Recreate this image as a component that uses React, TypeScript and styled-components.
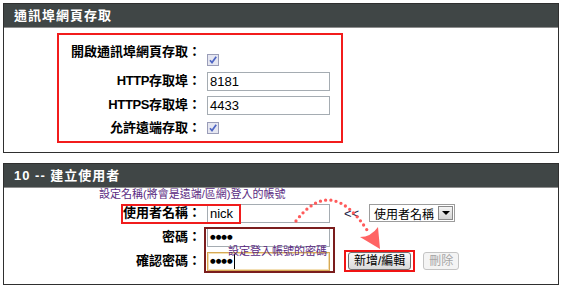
import React from 'react';
import styled, { createGlobalStyle } from 'styled-components';

const GlobalStyle = createGlobalStyle`
  html, body {
    margin: 0;
    padding: 0;
    background: #ffffff;
  }
  body {
    font-family: "Liberation Sans", "Noto Sans CJK TC", sans-serif;
    color: #000000;
  }
`;

const Page = styled.div`
  padding: 3px 3px 0;
  display: flex;
  flex-direction: column;
  gap: 10px;
`;

const Panel = styled.section`
  border: 1px solid #2f2f2f;
`;

const Header = styled.div`
  height: 23px;
  line-height: 23px;
  background: #404646;
  border-bottom: 1px solid #8e8e8e;
  color: #ffffff;
  font-size: 13px;
  font-weight: 700;
  letter-spacing: 1px;
  padding-left: 10px;
  white-space: nowrap;
`;

const AccessBody = styled.div`
  padding: 5px 0 9px 53px;
`;

// red annotation frame around the whole access form
const RedFrame = styled.div`
  width: 286px;
  box-sizing: border-box;
  border: 2px solid #f21c1c;
  padding: 6px 0 2px 0;
`;

const UserBody = styled.div`
  position: relative;
  padding: 0 0 11px 0;
`;

const Hint = styled.div`
  height: 13px;
  line-height: 13px;
  padding-left: 95px;
  font-size: 11px;
  color: #5a2a82;
  white-space: nowrap;
`;

const FormGrid = styled.div<{ $columns: string; $rows: string }>`
  display: grid;
  grid-template-columns: ${(p) => p.$columns};
  grid-template-rows: ${(p) => p.$rows};
  column-gap: 6px;
`;

const Label = styled.div<{ $top?: boolean }>`
  align-self: ${(p) => (p.$top ? 'start' : 'center')};
  line-height: 22px;
  text-align: right;
  font-size: 13px;
  font-weight: 700;
  white-space: nowrap;
`;

const Latin = styled.span`
  letter-spacing: -0.4px;
`;

const Field = styled.div<{ $focused?: boolean }>`
  align-self: center;
  height: 19px;
  box-sizing: border-box;
  border: 1px solid ${(p) => (p.$focused ? '#d6a955' : '#a5acb2')};
  box-shadow: ${(p) => (p.$focused ? 'inset 0 0 0 1px #f3dfb4' : 'none')};
  background: #ffffff;
  padding: 0 2px;
  display: flex;
  align-items: center;
  font-size: 13px;
  white-space: nowrap;
`;

const Mask = styled.span`
  font-family: "DejaVu Sans", sans-serif;
  font-size: 6.5px;
  line-height: 1;
`;

const Caret = styled.span`
  width: 1px;
  height: 15px;
  background: #000000;
  margin-left: 1px;
`;

const CheckWrap = styled.div<{ $bottom?: boolean }>`
  align-self: ${(p) => (p.$bottom ? 'end' : 'center')};
  margin-bottom: ${(p) => (p.$bottom ? '3px' : '0')};
  height: 12px;
  display: flex;
`;

const Extra = styled.div`
  align-self: center;
  margin-left: 8px;
  display: flex;
  align-items: center;
`;

const Arrows = styled.span`
  font-size: 13px;
  color: #1c1c44;
  width: 25px;
`;

const Select = styled.div`
  width: 86px;
  height: 18px;
  box-sizing: border-box;
  border: 1px solid #9c9c9c;
  display: flex;
  align-items: center;
  justify-content: space-between;
  padding: 0 1px 0 4px;
  font-size: 12px;
  white-space: nowrap;
`;

const SelectButton = styled.span`
  width: 15px;
  height: 14px;
  box-sizing: border-box;
  border: 1px solid #8a8a8a;
  background: linear-gradient(#f4f4f4, #d4d4d4);
  display: flex;
  align-items: center;
  justify-content: center;
`;

const Triangle = styled.span`
  width: 0;
  height: 0;
  border-left: 4px solid transparent;
  border-right: 4px solid transparent;
  border-top: 4px solid #000000;
`;

const ButtonFrame = styled.div`
  border: 2px solid #f01414;
  padding: 0 2px;
  display: flex;
`;

const Button = styled.button<{ $disabled?: boolean }>`
  height: 18px;
  padding: 0 5px;
  box-sizing: border-box;
  border: 1px solid ${(p) => (p.$disabled ? '#c4c4c4' : '#707070')};
  border-radius: 3px;
  background: ${(p) => (p.$disabled ? '#f4f4f4' : 'linear-gradient(#f8f8f8, #dadada)')};
  color: ${(p) => (p.$disabled ? '#a6a6a6' : '#000000')};
  font-family: "Liberation Sans", "Noto Sans CJK TC", sans-serif;
  font-size: 12px;
  line-height: 16px;
  margin-left: ${(p) => (p.$disabled ? '8px' : '0')};
  white-space: nowrap;
`;

// annotations drawn over the user form
const Outline = styled.div<{ $color: string }>`
  position: absolute;
  box-sizing: border-box;
  border: 2px solid ${(p) => p.$color};
  pointer-events: none;
`;

const Note = styled.div`
  position: absolute;
  left: 224px;
  top: 56px;
  line-height: 14px;
  font-size: 11px;
  color: #5a2a82;
  white-space: nowrap;
`;

const Overlay = styled.svg`
  position: absolute;
  left: 0;
  top: 0;
  overflow: visible;
  pointer-events: none;
`;

function Checkbox() {
  return (
    <svg width="12" height="12" viewBox="0 0 12 12">
      <rect x="0.5" y="0.5" width="11" height="11" fill="#e6e7f1" stroke="#9a9db8" />
      <path d="M3 6.2 L5 8.6 L9.2 2.8" fill="none" stroke="#4f66c4" strokeWidth="1.7" />
    </svg>
  );
}

export default function App() {
  return (
    <>
      <GlobalStyle />
      <Page>
        <Panel>
          <Header>通訊埠網頁存取</Header>
          <AccessBody>
            <RedFrame>
              <FormGrid $columns="142px 123px" $rows="28px 24px 24px 22px">
                <Label $top>開啟通訊埠網頁存取：</Label>
                <CheckWrap $bottom>
                  <Checkbox />
                </CheckWrap>
                <Label>
                  <Latin>HTTP</Latin>存取埠：
                </Label>
                <Field>8181</Field>
                <Label>
                  <Latin>HTTPS</Latin>存取埠：
                </Label>
                <Field>4433</Field>
                <Label>允許遠端存取：</Label>
                <CheckWrap>
                  <Checkbox />
                </CheckWrap>
              </FormGrid>
            </RedFrame>
          </AccessBody>
        </Panel>

        <Panel>
          <Header>10 -- 建立使用者</Header>
          <UserBody>
            <Hint>設定名稱(將會是遠端/區網)登入的帳號</Hint>
            <FormGrid $columns="197px 123px auto" $rows="24px 24px 24px">
              <Label>使用者名稱：</Label>
              <Field>nick</Field>
              <Extra>
                <Arrows>&lt;&lt;</Arrows>
                <Select>
                  使用者名稱
                  <SelectButton>
                    <Triangle />
                  </SelectButton>
                </Select>
              </Extra>
              <Label>密碼：</Label>
              <Field>
                <Mask>●●●●</Mask>
              </Field>
              <div />
              <Label>確認密碼：</Label>
              <Field $focused>
                <Mask>●●●●</Mask>
                <Caret />
              </Field>
              <Extra>
                <ButtonFrame>
                  <Button>新增/編輯</Button>
                </ButtonFrame>
                <Button $disabled>刪除</Button>
              </Extra>
            </FormGrid>

            <Outline $color="#f01c1c" style={{ left: 117, top: 16, width: 120, height: 20 }} />
            <Outline $color="#7b1d1d" style={{ left: 200, top: 39, width: 131, height: 46 }} />
            <Note>設定登入帳號的密碼</Note>
            <Overlay width="554" height="97" viewBox="4 189 554 97">
              <path
                d="M296 222 Q331 176 367 231"
                fill="none"
                stroke="#ff5b5b"
                strokeWidth="3.3"
                strokeLinecap="round"
                strokeDasharray="0 5.3"
              />
              <path d="M360 238 Q371 238 378 228 L380 250 Z" fill="#ff6464" />
            </Overlay>
          </UserBody>
        </Panel>
      </Page>
    </>
  );
}
